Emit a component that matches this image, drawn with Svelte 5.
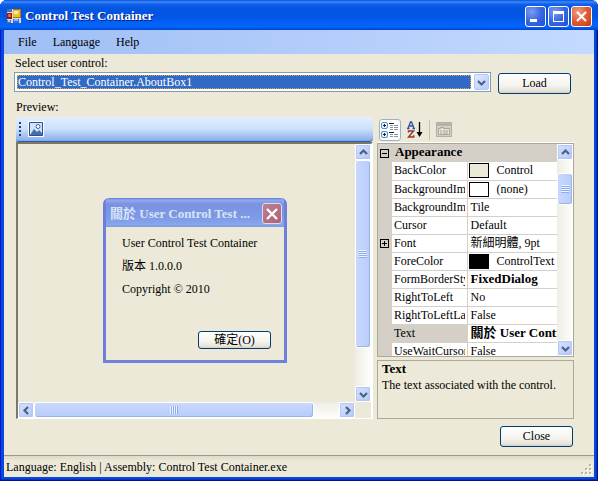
<script>
  const menus = ['File', 'Language', 'Help'];
  const assemblies = ['Control_Test_Container.AboutBox1'];
  let control = $state(assemblies[0]);

  const rows = [
    { name: 'BackColor', value: 'Control', swatch: '#ece9d8' },
    { name: 'BackgroundImage', value: '(none)', swatch: '#ffffff' },
    { name: 'BackgroundImageLayout', value: 'Tile' },
    { name: 'Cursor', value: 'Default' },
    { name: 'Font', value: '新細明體, 9pt', expandable: true },
    { name: 'ForeColor', value: 'ControlText', swatch: '#000000' },
    { name: 'FormBorderStyle', value: 'FixedDialog', changed: true },
    { name: 'RightToLeft', value: 'No' },
    { name: 'RightToLeftLayout', value: 'False' },
    { name: 'Text', value: '關於 User Control Test Container', changed: true, selected: true },
    { name: 'UseWaitCursor', value: 'False' }
  ];
  const chevrons = {
    up: 'M1 6 4.500 2.500 8 6',
    down: 'M1 3 4.500 6.500 8 3',
    left: 'M6 1 2.500 4.500 6 8',
    right: 'M3 1 6.500 4.500 3 8'
  };
</script>

{#snippet arrow(dir)}
  <svg width="9" height="9" viewBox="0 0 9 9" aria-hidden="true">
    <path d={chevrons[dir]} fill="none" stroke="#4d6185" stroke-width="2.200" />
  </svg>
{/snippet}

{#snippet expander(plus)}
  <svg width="9" height="9" viewBox="0 0 9 9" shape-rendering="crispEdges" aria-hidden="true">
    <path d="M.5.5h8v8h-8zM2 4.500h5" fill="none" stroke="#000" />
    {#if plus}<path d="M4.500 2v5" stroke="#000" />{/if}
  </svg>
{/snippet}

<div class="window">
  <header class="titlebar">
    <svg class="logo" width="14" height="14" viewBox="0 0 14 14" shape-rendering="crispEdges" aria-hidden="true">
      <path d="M0 0h14v14H0z" fill="#d8dde9" />
      <path d="M0 0h5v3H0z" fill="#4a6bb4" />
      <path d="M0 4h5v6H0z" fill="#8e1a14" /><path d="M1 5h3v3H1z" fill="#e2573f" />
      <path d="M6 0h8v9H6z" fill="#a87909" /><path d="M6 1h7v7H6z" fill="#f7bd28" /><path d="M7 2h4v3H7z" fill="#ffe998" />
      <path d="M6 10h6v4H6z" fill="#2f6fd6" /><path d="M7 10h4v2H7z" fill="#8ab8f5" />
      <path d="M0 11h4v3H0z" fill="#5b7396" /><path d="M1 11h2v2H1z" fill="#b9c6d8" />
    </svg>
    <h1>Control Test Container</h1>
    <div class="captions">
      <button class="cap" aria-label="Minimize">
        <svg width="19" height="19" viewBox="0 0 19 19"><path d="M4 12h7v3H4z" fill="#fff" /></svg>
      </button>
      <button class="cap" aria-label="Maximize">
        <svg width="19" height="19" viewBox="0 0 19 19" shape-rendering="crispEdges"><path d="M4 4h11v11H4zM5 7v7h9V7z" fill="#fff" fill-rule="evenodd" /></svg>
      </button>
      <button class="cap red" aria-label="Close window">
        <svg width="19" height="19" viewBox="0 0 19 19"><path d="m5 5 9 9m0-9-9 9" stroke="#fff" stroke-width="2.200" /></svg>
      </button>
    </div>
  </header>

  <div class="client">
    <nav>
      {#each menus as m}<button>{m}</button>{/each}
    </nav>

    <div class="picker">
      <label for="control">Select user control:</label>
      <div class="picker-row">
        <div class="combo">
          <select id="control" bind:value={control}>
            {#each assemblies as a}<option>{a}</option>{/each}
          </select>
          <span class="drop">{@render arrow('down')}</span>
        </div>
        <button class="btn">Load</button>
      </div>
    </div>

    <main>
      <section class="preview">
        <h2>Preview:</h2>
        <div class="strip">
          <span class="grip"></span>
          <button class="picture" aria-label="Picture">
            <svg width="14" height="14" viewBox="0 0 14 14" aria-hidden="true">
              <path d="M.5.5h13v13H.5z" fill="#d4e4fa" stroke="#30508c" />
              <path d="m1 13 4-6 3 3 2-2 3 3v2z" fill="#456fb0" />
              <circle cx="9" cy="4.500" r="2" fill="#fff" stroke="#3b5f9f" />
            </svg>
          </button>
        </div>
        <div class="canvas">
          <div class="surface">
            <div class="dialog" role="dialog" aria-label="About">
              <div class="dialog-title">
                <h3>關於 User Control Test ...</h3>
                <button class="cap faded" aria-label="Close dialog">
                  <svg width="18" height="18" viewBox="0 0 18 18"><path d="m4 4 10 10m0-10-10 10" stroke="#fff" stroke-width="2.400" /></svg>
                </button>
              </div>
              <div class="dialog-body">
                <p>User Control Test Container</p>
                <p>版本 1.0.0.0</p>
                <p>Copyright © 2010</p>
                <button class="btn small">確定(O)</button>
              </div>
            </div>
          </div>
          <div class="vbar">
            <button class="sb" aria-label="Scroll up">{@render arrow('up')}</button>
            <div class="thumb long"><i></i></div>
            <button class="sb" aria-label="Scroll down">{@render arrow('down')}</button>
          </div>
          <div class="hbar">
            <button class="sb" aria-label="Scroll left">{@render arrow('left')}</button>
            <div class="thumb wide"><i></i></div>
            <button class="sb" aria-label="Scroll right">{@render arrow('right')}</button>
          </div>
        </div>
      </section>

      <section class="props">
        <div class="tools">
          <button class="tool on" aria-label="Categorized">
            <svg width="18" height="18" viewBox="0 0 18 18" aria-hidden="true">
              <rect x=".5" y="1.500" width="6" height="6" rx="1.500" fill="#e8f2fc" stroke="#5a8fc8" />
              <rect x=".5" y="10.500" width="6" height="6" rx="1.500" fill="#e8f2fc" stroke="#5a8fc8" />
              <path d="M2 4.500h3M3.500 3v3M2 13.500h3M3.500 12v3" stroke="#14213f" />
              <path d="M8 2.500h5M8 11.500h5" stroke="#222" />
              <path d="M9 4.500h3m1 0h4M9 6.500h3m1 0h4M9 8.500h3m1 0h4M9 13.500h3m1 0h4M9 15.500h3m1 0h4" stroke="#8795ad" />
            </svg>
          </button>
          <button class="tool" aria-label="Alphabetical">
            <svg width="16" height="17" viewBox="0 0 16 17" aria-hidden="true">
              <path d="M1 7.500 3.500 1h1L7 7.500M2 5h4M0 7.500h2.500M5.500 7.500H8" fill="none" stroke="#2f50a4" stroke-width="1.300" />
              <path d="M1.500 11.500v-1.500h5L1.500 16h5.200v-1.700" fill="none" stroke="#9a3434" stroke-width="1.500" />
              <path d="M12.500 1v12" stroke="#000" stroke-width="1.300" /><path d="M9.500 11h6l-3 5z" />
            </svg>
          </button>
          <span class="sep"></span>
          <button class="tool" aria-label="Property pages" disabled>
            <svg width="16" height="15" viewBox="0 0 16 15" aria-hidden="true">
              <path d="M.5.5h15v14H.5z" fill="#d2cfc2" stroke="#b2afa5" />
              <path d="M1 2.500h14" stroke="#aaa79d" stroke-width="2" />
              <path d="M2.500 6.500h2v-1h3v1h6v6h-11z" fill="#e5e2d8" stroke="#aaa79c" />
              <path d="M4 9h2m1 0h5M4 11h2m1 0h5" stroke="#aaa79c" />
            </svg>
          </button>
        </div>

        <div class="grid">
          <div class="view">
            <table>
              <colgroup><col class="gutter" /><col class="name" /><col /></colgroup>
              <thead>
                <tr><th class="g">{@render expander(false)}</th><th colspan="2" class="cat">Appearance</th></tr>
              </thead>
              <tbody>
                {#each rows as r}
                  <tr class:selected={r.selected}>
                    <td class="g">{#if r.expandable}{@render expander(true)}{/if}</td>
                    <th scope="row"><div class="label">{r.name}</div></th>
                    <td class="value" class:changed={r.changed}>
                      <div class="cell">
                        {#if r.swatch}<span class="swatch" style:background={r.swatch}></span>{/if}<span>{r.value}</span>
                      </div>
                    </td>
                  </tr>
                {/each}
              </tbody>
            </table>
          </div>
          <div class="vbar">
            <button class="sb" aria-label="Scroll properties up">{@render arrow('up')}</button>
            <div class="thumb short"><i></i></div>
            <button class="sb" aria-label="Scroll properties down">{@render arrow('down')}</button>
          </div>
        </div>

        <div class="help">
          <strong>Text</strong>
          <p>The text associated with the control.</p>
        </div>
      </section>
    </main>

    <div class="actions"><button class="btn">Close</button></div>

    <footer>
      <span>Language: English | Assembly: Control Test Container.exe</span>
      <svg width="12" height="12" viewBox="0 0 12 12" shape-rendering="crispEdges" aria-hidden="true">
        <path d="M9 1h2v2H9zM5 5h2v2H5zM9 5h2v2H9zM1 9h2v2H1zM5 9h2v2H5zM9 9h2v2H9z" fill="#fff" />
        <path d="M8 0h2v2H8zM4 4h2v2H4zM8 4h2v2H8zM0 8h2v2H0zM4 8h2v2H4zM8 8h2v2H8z" fill="#b8b4a3" />
      </svg>
    </footer>
  </div>
</div>

<style>
  :global(body) { margin: 0; background: #fff; }
  .window, .window :global(*) { box-sizing: border-box; }
  .window {
    height: 100vh;
    min-height: 400px;
    display: flex;
    flex-direction: column;
    overflow: hidden;
    border-radius: 7px 7px 0 0;
    background: #0846dc;
    box-shadow: inset 1px 0 #0019cf, inset -1px -1px #00138c, inset -2px -2px #0530c0;
    color: #000;
    font: 12px/16px "Liberation Serif", "Noto Sans CJK TC", serif;
  }
  h1, h2, h3, p { margin: 0; font-size: inherit; font-weight: normal; }
  button, select { font: inherit; color: inherit; padding: 0; margin: 0; }
  svg { display: block; flex: none; }

  .titlebar {
    flex: none;
    height: 30px;
    display: flex;
    align-items: center;
    padding: 2px 6px 0 7px;
    background: linear-gradient(#0a50d8 0, #3b8cf8 2px, #1161ee 4px, #0455e0 8px, #0254e4 16px, #0463f8 24px, #0264fa 27px, #0043cf 30px);
  }
  h1 {
    flex: 1;
    margin-left: 4px;
    color: #fff;
    font-size: 13px;
    font-weight: bold;
    text-shadow: 1px 1px #0a1f80;
  }
  .captions { display: flex; gap: 2px; }
  .cap {
    width: 21px;
    height: 21px;
    border: 1px solid #fff;
    border-radius: 3px;
    background: radial-gradient(circle at 30% 25%, #7a9df0, #3a66e2 50%, #2050d0);
  }
  .cap.red { background: radial-gradient(circle at 30% 25%, #f09a80, #e15a35 50%, #c83a10); }

  .client {
    flex: 1;
    min-height: 0;
    display: flex;
    flex-direction: column;
    margin: 0 4px 4px;
    background: #ece9d8;
  }
  nav {
    flex: none;
    height: 24px;
    display: flex;
    padding-left: 6px;
    background: linear-gradient(90deg, #9ebef5, #c4daff);
  }
  nav button { padding: 0 8px; border: 0; background: none; }

  .picker { flex: none; padding: 0 23px 0 10px; }
  label { display: block; height: 18px; padding-left: 1px; line-height: 18px; }
  .picker-row { display: flex; gap: 7px; }
  .combo {
    flex: 1;
    height: 20px;
    display: flex;
    padding: 1px;
    border: 1px solid #7f9db9;
    background: #fff;
  }
  select {
    flex: 1;
    height: 14px;
    margin: 1px 3px 1px 1px;
    padding-left: 1px;
    appearance: none;
    border: 0;
    border-radius: 0;
    outline: 1px dotted #e9a53a;
    outline-offset: -1px;
    background: #316ac5;
    color: #fff;
    line-height: 14px;
  }
  .drop, .sb {
    display: flex;
    align-items: center;
    justify-content: center;
    border: 1px solid #b4c8f6;
    border-radius: 2px;
    background: linear-gradient(135deg, #e1eafe, #b7cbf9);
  }
  .drop { width: 15px; height: 16px; pointer-events: none; }
  .btn {
    width: 73px;
    height: 21px;
    margin-top: 1px;
    padding-bottom: 2px;
    border: 1px solid #003c74;
    border-radius: 3px;
    background: linear-gradient(#fff, #f4f3ee 60%, #e8e6dc 85%, #d8d0c4);
  }

  main {
    flex: 1;
    min-height: 0;
    display: flex;
    gap: 4px;
    padding: 0 20px 0 12px;
  }
  section { display: flex; flex-direction: column; min-width: 0; }
  .preview { flex: 1; }
  h2 { flex: none; height: 23px; line-height: 26px; }
  .strip {
    flex: none;
    height: 25px;
    display: flex;
    align-items: center;
    gap: 7px;
    padding-left: 3px;
    border-bottom: 1px solid #2a5cb0;
    border-radius: 2px 4px 4px 2px;
    background: linear-gradient(#e3efff, #cbe0fc 50%, #8db2ea 95%, #7ba4e0);
  }
  .grip { width: 2px; height: 14px; background: repeating-linear-gradient(#274176 0 2px, transparent 2px 4px); }
  .picture { border: 1px solid #fff; background: none; }
  .canvas {
    flex: 1;
    min-height: 0;
    display: grid;
    grid-template: minmax(0, 1fr) 16px / minmax(0, 1fr) 16px;
    border: 1px solid #fff;
    border-width: 2px 2px 1px 2px;
    border-color: #7b7869 #fff #fff #7b7869;
  }
  .surface { position: relative; overflow: hidden; }

  .vbar, .hbar { display: flex; background: linear-gradient(#eeede5, #fefefb); }
  .vbar { width: 16px; flex-direction: column; background: linear-gradient(90deg, #eeede5, #fefefb); }
  .sb {
    flex: none;
    width: 16px;
    height: 16px;
    border-color: #fff;
    box-shadow: inset 0 0 0 1px #b4c8f6, inset -1px -1px 1px #8fadec;
    background: linear-gradient(135deg, #d3e0fe, #b7cbfa);
  }
  .thumb {
    display: flex;
    align-items: center;
    justify-content: center;
    border: 1px solid #fff;
    border-radius: 3px;
    background: linear-gradient(#c9d8fc, #b8ccfb);
    box-shadow: inset -1px -1px #98b4ee;
  }
  .thumb i { width: 8px; height: 8px; background: repeating-linear-gradient(90deg, #eef4fe 0 1px, #8caef0 1px 2px); }
  .vbar .thumb { background: linear-gradient(90deg, #c9d8fc, #b8ccfb); }
  .vbar .thumb i { background: repeating-linear-gradient(#eef4fe 0 1px, #8caef0 1px 2px); }
  .thumb.wide { flex: 1; margin-right: 25px; }
  .thumb.long { flex: 1; margin-bottom: 38px; }
  .thumb.short { height: 32px; margin: 13px 0 auto; }

  .dialog {
    position: absolute;
    left: 85px;
    top: 54px;
    width: 184px;
    overflow: hidden;
    border: solid #6f80dc;
    border-width: 0 3px 3px;
    border-radius: 6px 6px 0 0;
    background: #ece9d8;
  }
  .dialog-title {
    height: 29px;
    display: flex;
    align-items: center;
    gap: 4px;
    margin: 0 -3px;
    padding: 2px 5px 0 7px;
    background: linear-gradient(#6078d8 0, #93a9ee 2px, #7b93e0 6px, #7d98e4 18px, #86a6ee 27px, #7f98e2);
  }
  h3 {
    flex: 1;
    min-width: 0;
    white-space: nowrap;
    color: #d8e4f8;
    font-size: 13px;
    font-weight: bold;
  }
  .cap.faded { flex: none; width: 20px; background: linear-gradient(135deg, #b98094, #b56174); border-color: #d8dcf4; }
  .dialog-body { display: flex; flex-direction: column; gap: 7px; padding: 8px 13px 11px 16px; }
  .btn.small { align-self: flex-end; height: 18px; margin-top: 27px; padding: 0; line-height: 16px; }

  .props { width: 197px; padding-top: 23px; }
  .tools {
    flex: none;
    height: 26px;
    display: flex;
    align-items: center;
    gap: 3px;
    padding: 0 2px;
    border-bottom: 1px solid #fff;
  }
  .tool {
    width: 22px;
    height: 22px;
    display: flex;
    align-items: center;
    justify-content: center;
    border: 1px solid transparent;
    border-radius: 3px;
    background: none;
  }
  .tool.on { border-color: #98b5c8; background: #fff; }
  .sep { width: 1px; height: 20px; background: #c5c2b2; }
  .grid {
    flex: 1;
    min-height: 0;
    display: flex;
    border: 1px solid #aca899;
    background: #fff;
  }
  .view { flex: 1; min-width: 0; overflow: hidden; background: #d4d0c8; }
  table { width: 100%; table-layout: fixed; border-collapse: collapse; background: #fff; }
  .gutter { width: 14px; }
  .name { width: 75px; }
  tr { height: 18px; }
  th, td { height: 18px; padding: 0; overflow: hidden; white-space: nowrap; text-align: left; font-weight: normal; line-height: 16px; vertical-align: top; }
  .g { background: #d4d0c8; padding: 5px 0 0 2px; line-height: 0; }
  .cat { background: #d4d0c8; padding-left: 3px; font-size: 13px; font-weight: bold; }
  tbody th { padding: 0 2px; border-bottom: 1px solid #d4d0c8; }
  .label { overflow: hidden; }
  .value { border-left: 1px solid #d4d0c8; border-bottom: 1px solid #d4d0c8; }
  .cell { display: flex; align-items: flex-start; height: 16px; padding-left: 3px; overflow: hidden; }
  .swatch { flex: none; width: 20px; height: 15px; margin: 1px 8px 0 -2px; border: 1px solid #000; }
  .changed { font-size: 13px; font-weight: bold; }
  .selected th { background: #d4d0c8; }

  .help {
    flex: none;
    height: 59px;
    margin-top: 3px;
    padding: 0 4px;
    border: 1px solid #aca899;
  }
  .help strong { display: block; font-size: 13px; }

  .actions { flex: none; display: flex; justify-content: flex-end; padding: 6px 21px 8px 0; }
  footer {
    flex: none;
    height: 22px;
    display: flex;
    align-items: center;
    justify-content: space-between;
    padding: 0 1px 0 2px;
    border-top: 1px solid #9d9a8b;
    background: linear-gradient(#dcd9c8, #ece9d8 5px);
  }
  footer svg { align-self: flex-end; margin-bottom: 1px; }
</style>
